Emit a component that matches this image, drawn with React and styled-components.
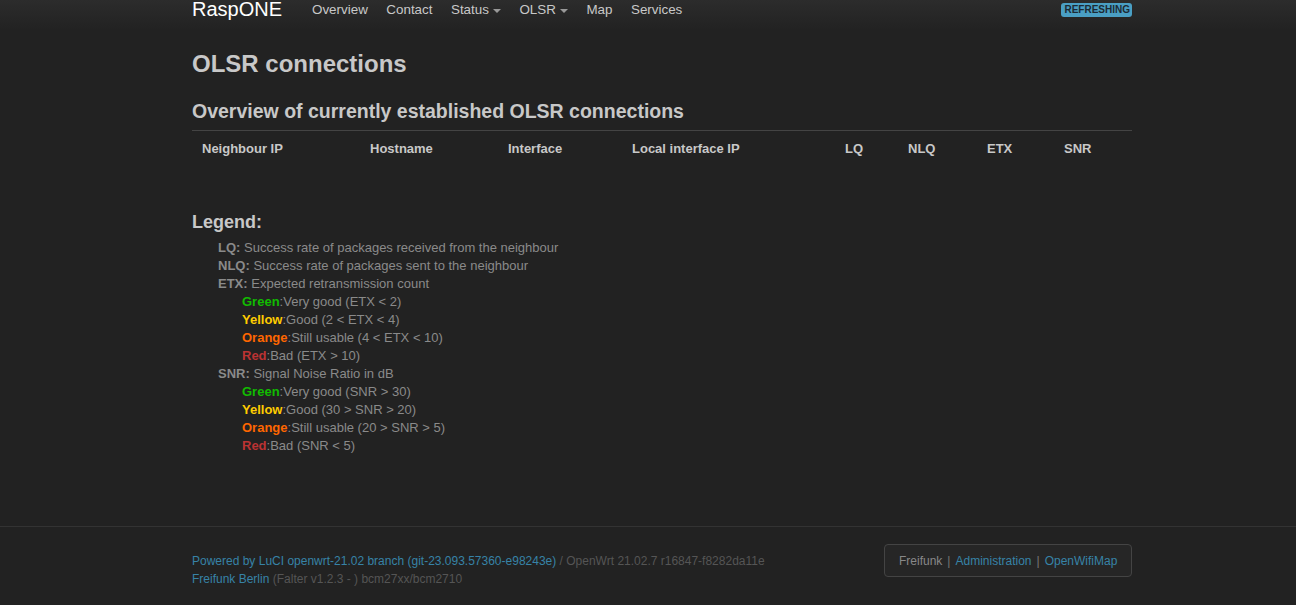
import React from "react";
import styled, { createGlobalStyle } from "styled-components";

const Global = createGlobalStyle`
  html, body { margin: 0; padding: 0; background: #222; }
  body { font-family: "Liberation Sans", Arial, sans-serif; color: #ccc; font-size: 13px; }
`;

const Page = styled.div`
  min-height: 605px;
  display: flex;
  flex-direction: column;
  background: #222;
`;

const NavBar = styled.header`
  height: 30px;
  background: linear-gradient(#2c2c2c, #222);
`;

const Inner = styled.div`
  width: 940px;
  margin-left: calc(50% - 456px);
`;

const NavInner = styled(Inner)`
  display: flex;
  align-items: flex-start;
  height: 30px;
`;

const Brand = styled.div`
  font-size: 20px;
  color: #fff;
  line-height: 18px;
  width: 120px;
`;

const Menu = styled.nav`
  display: flex;
  flex: 1;
  padding-top: 1px;
`;

const MenuItem = styled.span`
  font-size: 13.4px;
  color: #c8c8c8;
  line-height: 18px;
  margin-right: 18.5px;
  display: inline-flex;
  align-items: center;
`;

const Caret = styled.span`
  display: inline-block;
  width: 0;
  height: 0;
  border-left: 4px solid transparent;
  border-right: 4px solid transparent;
  border-top: 4px solid #999;
  margin-left: 4px;
  margin-top: 1px;
`;

const Badge = styled.span`
  margin-top: 3px;
  background: #4a9fc4;
  color: #1d2a33;
  font-weight: bold;
  font-size: 10px;
  line-height: 14px;
  padding: 0 2px 0 3px;
  border-radius: 3px;
`;

const Main = styled(Inner)`
  flex: 1;
  padding-top: 21px;
`;

const H2 = styled.h2`
  margin: 0;
  font-size: 24px;
  line-height: 26px;
  font-weight: bold;
  color: #c8c8c8;
`;

const H3 = styled.h3`
  margin: 21px 0 0;
  font-size: 19.5px;
  line-height: 26px;
  font-weight: bold;
  color: #c8c8c8;
  padding-bottom: 6px;
  border-bottom: 1px solid #444;
`;

const Table = styled.div`
  display: grid;
  grid-template-columns: 168px 138px 124px 213px 63px 79px 77px 1fr;
  padding: 10px 0 0 10px;
  height: 50px;
`;

const Th = styled.div`
  font-weight: bold;
  font-size: 13px;
  color: #c8c8c8;
  line-height: 16px;
`;

const LegendTitle = styled.h4`
  margin: 21px 0 7px;
  font-size: 18px;
  line-height: 20px;
  font-weight: bold;
  color: #c8c8c8;
`;

const List = styled.ul`
  list-style: none;
  margin: 0;
  padding: 0 0 0 ${(p) => p.$indent}px;
`;

const Item = styled.li`
  font-size: 13px;
  line-height: 18px;
  color: #8a8a8a;
`;

const Label = styled.b`
  color: ${(p) => p.$c || "#8a8a8a"};
`;

const Footer = styled.footer`
  border-top: 1px solid #333;
  height: 78px;
`;

const FooterInner = styled(Inner)`
  display: flex;
  justify-content: space-between;
  align-items: flex-start;
  padding-top: 17px;
`;

const FootText = styled.div`
  font-size: 12px;
  line-height: 18px;
  color: #555;
  padding-top: 8px;
`;

const Link = styled.span`
  color: #3783a7;
`;

const LinkBox = styled.div`
  border: 1px solid #444;
  border-radius: 4px;
  background: #262626;
  padding: 8px 14px 7px;
  font-size: 12px;
  line-height: 16px;
  color: #888;
  width: 218px;
`;

const Sep = styled.span`
  color: #777;
  margin: 0 5px;
`;

const etx = [
  ["Green", "#11bb00", "Very good (ETX < 2)"],
  ["Yellow", "#ffcc00", "Good (2 < ETX < 4)"],
  ["Orange", "#ff6600", "Still usable (4 < ETX < 10)"],
  ["Red", "#bb3333", "Bad (ETX > 10)"],
];
const snr = [
  ["Green", "#11bb00", "Very good (SNR > 30)"],
  ["Yellow", "#ffcc00", "Good (30 > SNR > 20)"],
  ["Orange", "#ff6600", "Still usable (20 > SNR > 5)"],
  ["Red", "#bb3333", "Bad (SNR < 5)"],
];

const Colors = ({ rows }) => (
  <List $indent={24}>
    {rows.map(([n, c, t]) => (
      <Item key={n}>
        <Label $c={c}>{n}</Label>:{t}
      </Item>
    ))}
  </List>
);

export default function App() {
  return (
    <Page>
      <Global />
      <NavBar>
        <NavInner>
          <Brand>RaspONE</Brand>
          <Menu>
            <MenuItem>Overview</MenuItem>
            <MenuItem>Contact</MenuItem>
            <MenuItem>Status<Caret /></MenuItem>
            <MenuItem>OLSR<Caret /></MenuItem>
            <MenuItem>Map</MenuItem>
            <MenuItem>Services</MenuItem>
          </Menu>
          <Badge>REFRESHING</Badge>
        </NavInner>
      </NavBar>
      <Main>
        <H2>OLSR connections</H2>
        <H3>Overview of currently established OLSR connections</H3>
        <Table>
          {["Neighbour IP", "Hostname", "Interface", "Local interface IP", "LQ", "NLQ", "ETX", "SNR"].map((h) => (
            <Th key={h}>{h}</Th>
          ))}
        </Table>
        <LegendTitle>Legend:</LegendTitle>
        <List $indent={26}>
          <Item><Label>LQ:</Label> Success rate of packages received from the neighbour</Item>
          <Item><Label>NLQ:</Label> Success rate of packages sent to the neighbour</Item>
          <Item><Label>ETX:</Label> Expected retransmission count</Item>
          <Item><Colors rows={etx} /></Item>
          <Item><Label>SNR:</Label> Signal Noise Ratio in dB</Item>
          <Item><Colors rows={snr} /></Item>
        </List>
      </Main>
      <Footer>
        <FooterInner>
          <FootText>
            <Link>Powered by LuCI openwrt-21.02 branch (git-23.093.57360-e98243e)</Link> / OpenWrt 21.02.7 r16847-f8282da11e
            <br />
            <Link>Freifunk Berlin</Link> (Falter v1.2.3 - ) bcm27xx/bcm2710
          </FootText>
          <LinkBox>
            Freifunk<Sep>|</Sep><Link>Administration</Link><Sep>|</Sep><Link>OpenWifiMap</Link>
          </LinkBox>
        </FooterInner>
      </Footer>
    </Page>
  );
}
